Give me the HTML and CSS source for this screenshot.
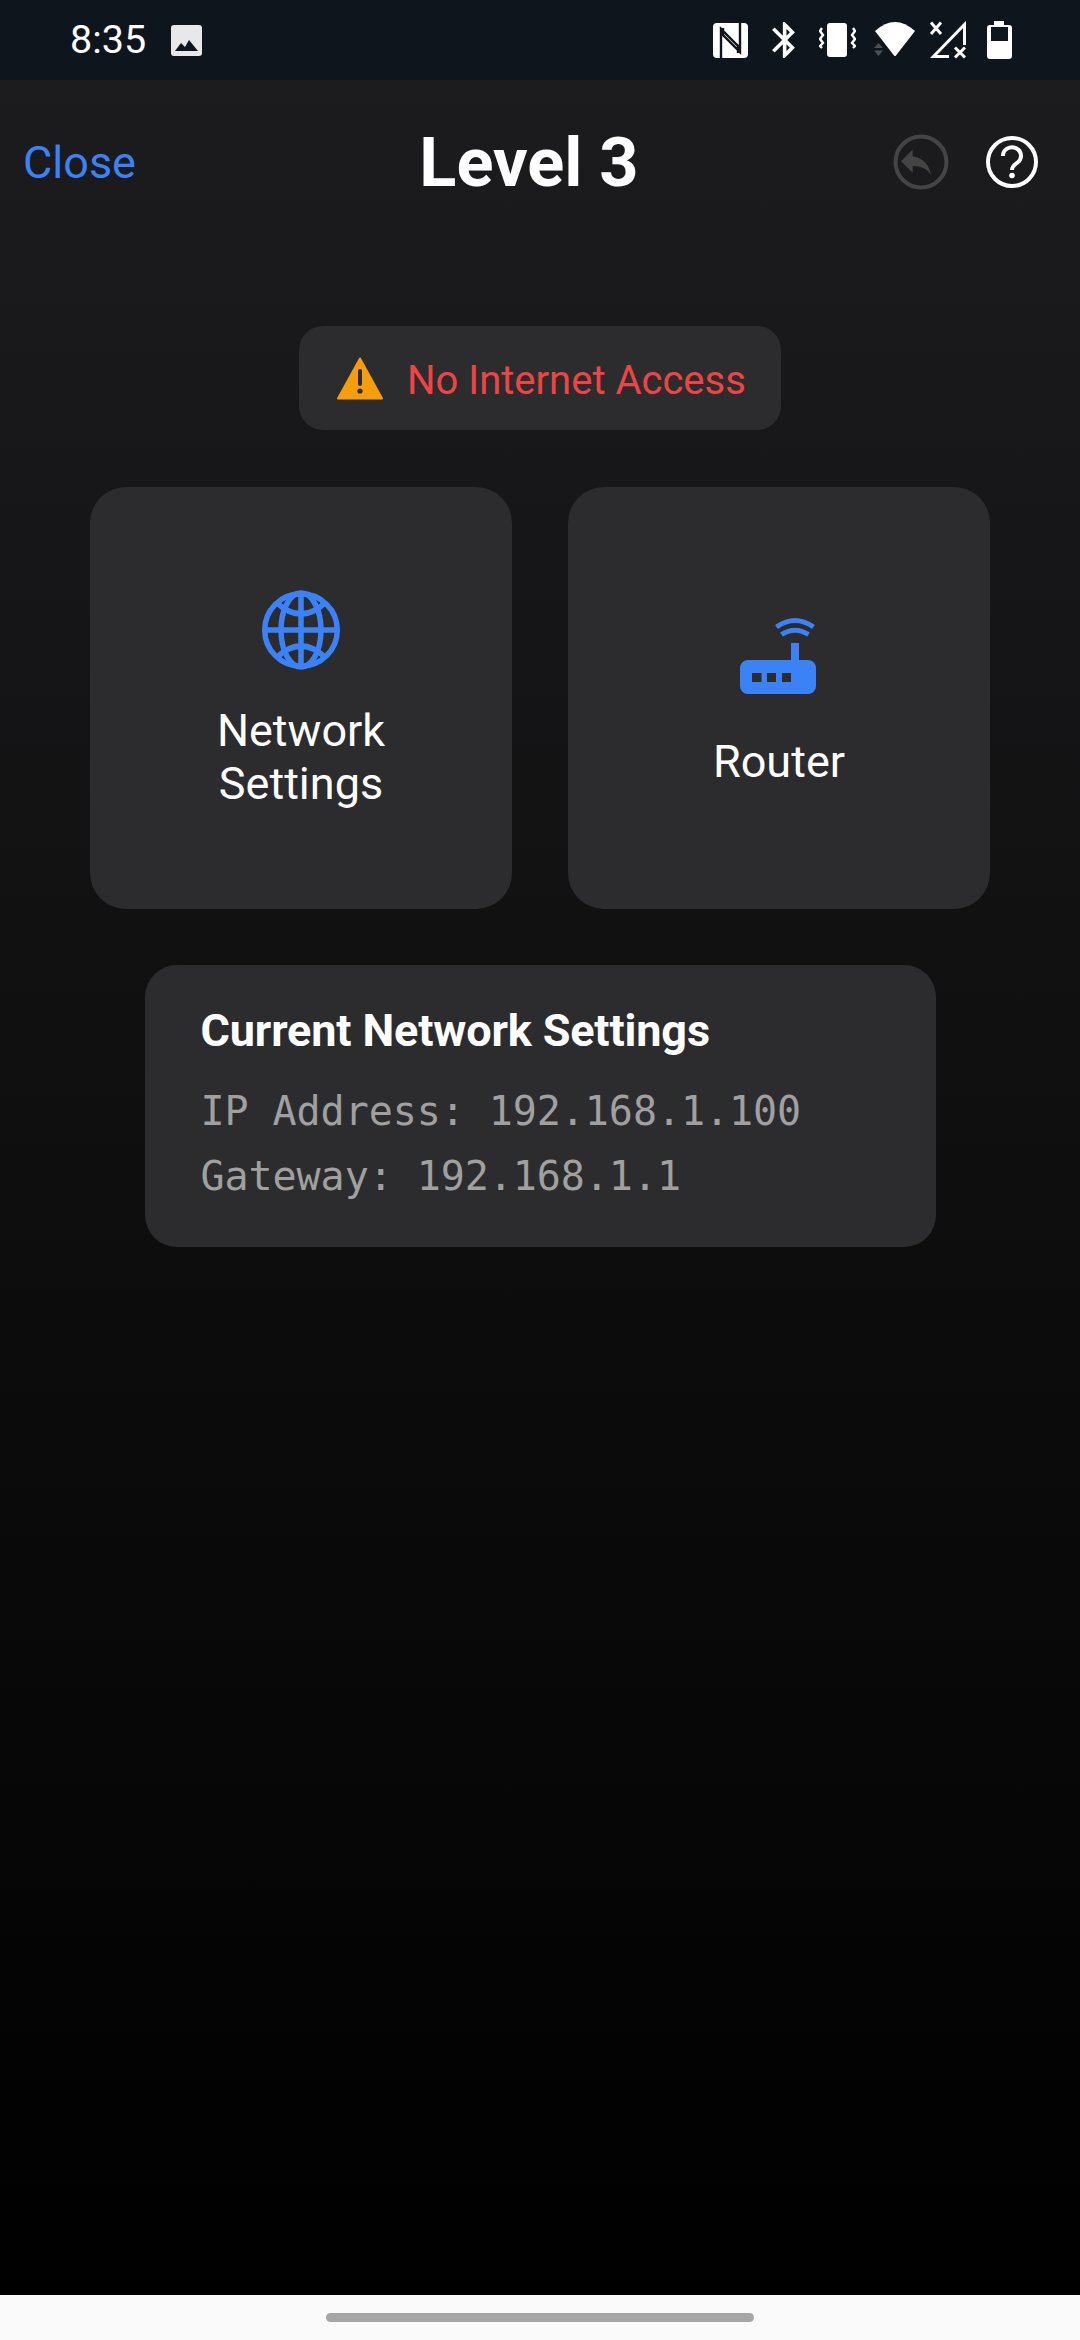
FILE: index.html
```html
<!DOCTYPE html>
<html lang="en">
<head>
<meta charset="utf-8">
<title>Level 3</title>
<link rel="stylesheet" href="styles.css">
</head>
<body>
<div class="app">
  <div class="status">
    <span class="time">8:35</span>
    <svg class="st-image" viewBox="0 0 31 31"><rect width="31" height="31" rx="3" fill="#e8e8ea"/><path d="M4 26l6-8 4 4 4-7 9 11z" fill="#0f151c"/></svg>
    <span class="status-spacer"></span>
    <svg class="st-nfc" viewBox="0 0 35 35"><rect width="35" height="35" rx="4" fill="#fff"/><path d="M8 35V6L25 23V30M27 0V29L10 12V5" fill="none" stroke="#0f151c" stroke-width="2.4"/></svg>
    <svg class="st-bt" viewBox="5 2 12.71 20"><path fill="#fff" d="M17.71 7.71L12 2h-1v7.59L6.41 5 5 6.41 10.59 12 5 17.59 6.41 19 11 14.41V22h1l5.71-5.71-4.3-4.29 4.3-4.29zM13 5.83l1.88 1.88L13 9.59V5.83zm1.88 10.46L13 18.17v-3.76l1.88 1.88z"/></svg>
    <svg class="st-vib" viewBox="0 0 37 36"><rect x="8" y="1" width="20" height="34" rx="3" fill="#fff"/><path d="M3 6l-2 3 3 4-3 4 3 4-3 3 2 2M34 6l2 3-3 4 3 4-3 4 3 3-2 2" fill="none" stroke="#fff" stroke-width="2.4"/></svg>
    <svg class="st-wifi" viewBox="0 0 42 36"><path d="M1 9Q21-9 41 9L22 33.500Q21 34.500 20 33.500Z" fill="#fff"/><path d="M0 26l4.500-5 4.500 5zM0 28.500l4.500 5.500 4.500-5.500z" fill="#4c5056"/></svg>
    <svg class="st-sig" viewBox="0 0 37 38"><path d="M20 35.500H4.500L35.500 3.500V24M2 1.500L12 13M12 1.500L2 13M26 26.500l10 10M36 26.500l-10 10" fill="none" stroke="#fff" stroke-width="3"/></svg>
    <svg class="st-bat" viewBox="0 0 25 38"><path d="M7 0h10v4h5a3 3 0 0 1 3 3v28a3 3 0 0 1-3 3H3a3 3 0 0 1-3-3V7a3 3 0 0 1 3-3h4z" fill="#fff"/><rect x="4" y="6" width="17" height="14" fill="#0f151c"/></svg>
  </div>

  <div class="screen">
    <header class="topbar">
      <span class="close">Close</span>
      <h1 class="title">Level 3</h1>
      <svg class="undo" viewBox="0 0 56 56"><circle cx="28" cy="28" r="25.500" fill="none" stroke="#444" stroke-width="4"/><path transform="translate(8 15.500) scale(1.667) translate(-3 -5)" fill="#444" d="M10 9V5l-7 7 7 7v-4.100c5 0 8.500 1.600 11 5.100-1-5-4-10-11-11z"/></svg>
      <svg class="help" viewBox="0 0 52 52"><circle cx="26" cy="26" r="24" fill="none" stroke="#fff" stroke-width="4"/><path d="M17 20a9 8.500 0 1 1 14.500 6.500c-3 2.500-5.500 3.500-5.500 7.500" fill="none" stroke="#fff" stroke-width="4"/><circle cx="26" cy="39.500" r="2.800" fill="#fff"/></svg>
    </header>

    <main class="content">
      <div class="alert">
        <svg class="alert-icon" viewBox="0 0 46 43"><path d="M23 1.500L45 41.500H1z" fill="#f59e0b" stroke="#f59e0b" stroke-width="2" stroke-linejoin="round"/><rect x="21" y="12" width="4" height="17" rx="2" fill="#2c2c2e"/><circle cx="23" cy="34" r="2.600" fill="#2c2c2e"/></svg>
        <span class="alert-text">No Internet Access</span>
      </div>

      <div class="cards">
        <div class="card card-net">
          <svg class="card-icon" viewBox="0 0 96 96" fill="none" stroke="#3b82f6" stroke-width="5.500">
            <circle cx="48" cy="48" r="36.300"/>
            <ellipse cx="48" cy="48" rx="20" ry="37"/>
            <path d="M48 11V85M11 48H85M23 20Q48 44 73 20M23 76Q48 52 73 76"/>
          </svg>
          <span class="card-label">Network<br>Settings</span>
        </div>
        <div class="card card-router">
          <svg class="card-icon" viewBox="0 0 96 96">
            <path fill="#3b82f6" fill-rule="evenodd" d="M60 35h8v17h9a8 8 0 0 1 8 8v18a8 8 0 0 1-8 8H17a8 8 0 0 1-8-8V60a8 8 0 0 1 8-8h43zM21 65v9h9.500v-9zM36 65v9h9v-9zM51 65v9h9v-9z"/>
            <path fill="none" stroke="#3b82f6" stroke-width="5" d="M45.500 19Q64 6 82.500 19M50.500 26.500Q64 18 77.500 26.500"/>
          </svg>
          <span class="card-label">Router</span>
        </div>
      </div>

      <section class="info">
        <h2 class="info-title">Current Network Settings</h2>
        <p class="info-line">IP Address: 192.168.1.100</p>
        <p class="info-line">Gateway: 192.168.1.1</p>
      </section>
    </main>
  </div>

  <div class="navbar"><span class="pill"></span></div>
</div>
</body>
</html>
```
FILE: styles.css
```css
* { box-sizing: border-box; }
html, body { margin: 0; padding: 0; background: #000; }
.app {
  width: 1080px;
  height: 2340px;
  display: flex;
  flex-direction: column;
  font-family: Roboto, sans-serif;
  color: #fff;
  overflow: hidden;
}
.status {
  height: 80px;
  flex: none;
  background: #0f151c;
  display: flex;
  align-items: center;
  padding: 0 68px 0 70px;
}
.time { width: 75px; font-size: 39.500px; line-height: 80px; color: #fff; }
.st-image { width: 31px; height: 31px; margin-left: 26px; }
.status-spacer { flex: 1; }
.st-nfc { width: 35px; height: 35px; }
.st-bt { width: 23px; height: 36px; margin-left: 24px; }
.st-vib { width: 37px; height: 36px; margin-left: 24px; }
.st-wifi { width: 42px; height: 36px; margin-left: 18px; }
.st-sig { width: 37px; height: 38px; margin-left: 13px; }
.st-bat { width: 25px; height: 38px; margin-left: 21px; }

.screen {
  flex: 1;
  display: flex;
  flex-direction: column;
  background: linear-gradient(180deg, #1c1c1e 0%, #000 100%);
}
.topbar {
  height: 164px;
  flex: none;
  display: flex;
  align-items: center;
  padding: 0 42px 0 23px;
}
.close { width: 142px; font-size: 45px; color: #3b82f6; }
.title {
  flex: 1;
  margin: 0;
  text-align: center;
  font-size: 68.500px;
  font-weight: 700;
}
.undo { width: 56px; height: 56px; }
.help { width: 52px; height: 52px; margin-left: 37px; }

.content {
  display: flex;
  flex-direction: column;
  align-items: center;
  padding-top: 82px;
}
.alert {
  width: 482px;
  height: 104px;
  background: #2c2c2e;
  border-radius: 24px;
  display: flex;
  align-items: center;
  padding-left: 38px;
  gap: 24px;
}
.alert-icon { width: 46px; height: 43px; }
.alert-text { font-size: 40px; padding-top: 5px; color: #ef4444; }

.cards {
  display: flex;
  gap: 56px;
  margin-top: 57px;
}
.card {
  width: 422px;
  height: 422px;
  background: #2c2c2e;
  border-radius: 36px;
  display: flex;
  flex-direction: column;
  align-items: center;
  justify-content: center;
  gap: 31px;
}
.card-net { gap: 26px; padding-bottom: 4px; }
.card-icon { width: 96px; height: 96px; }
.card-label {
  font-size: 45px;
  line-height: 53px;
  text-align: center;
}

.info {
  width: 791px;
  height: 282px;
  margin-top: 56px;
  background: #2c2c2e;
  border-radius: 32px;
  padding: 40px 56px 0;
}
.info-title {
  margin: 0 0 22px;
  font-size: 45px;
  line-height: 52px;
  font-weight: 700;
  letter-spacing: -0.15px;
}
.info-line {
  margin: 0;
  font-family: "DejaVu Sans Mono", monospace;
  font-size: 40px;
  line-height: 65px;
  letter-spacing: -0.06px;
  color: #a0a0a0;
}

.navbar {
  height: 45px;
  flex: none;
  background: #fafafa;
  display: flex;
  justify-content: center;
  padding-top: 18px;
}
.pill {
  width: 428px;
  height: 9px;
  border-radius: 5px;
  background: #a6a6a6;
}
```
